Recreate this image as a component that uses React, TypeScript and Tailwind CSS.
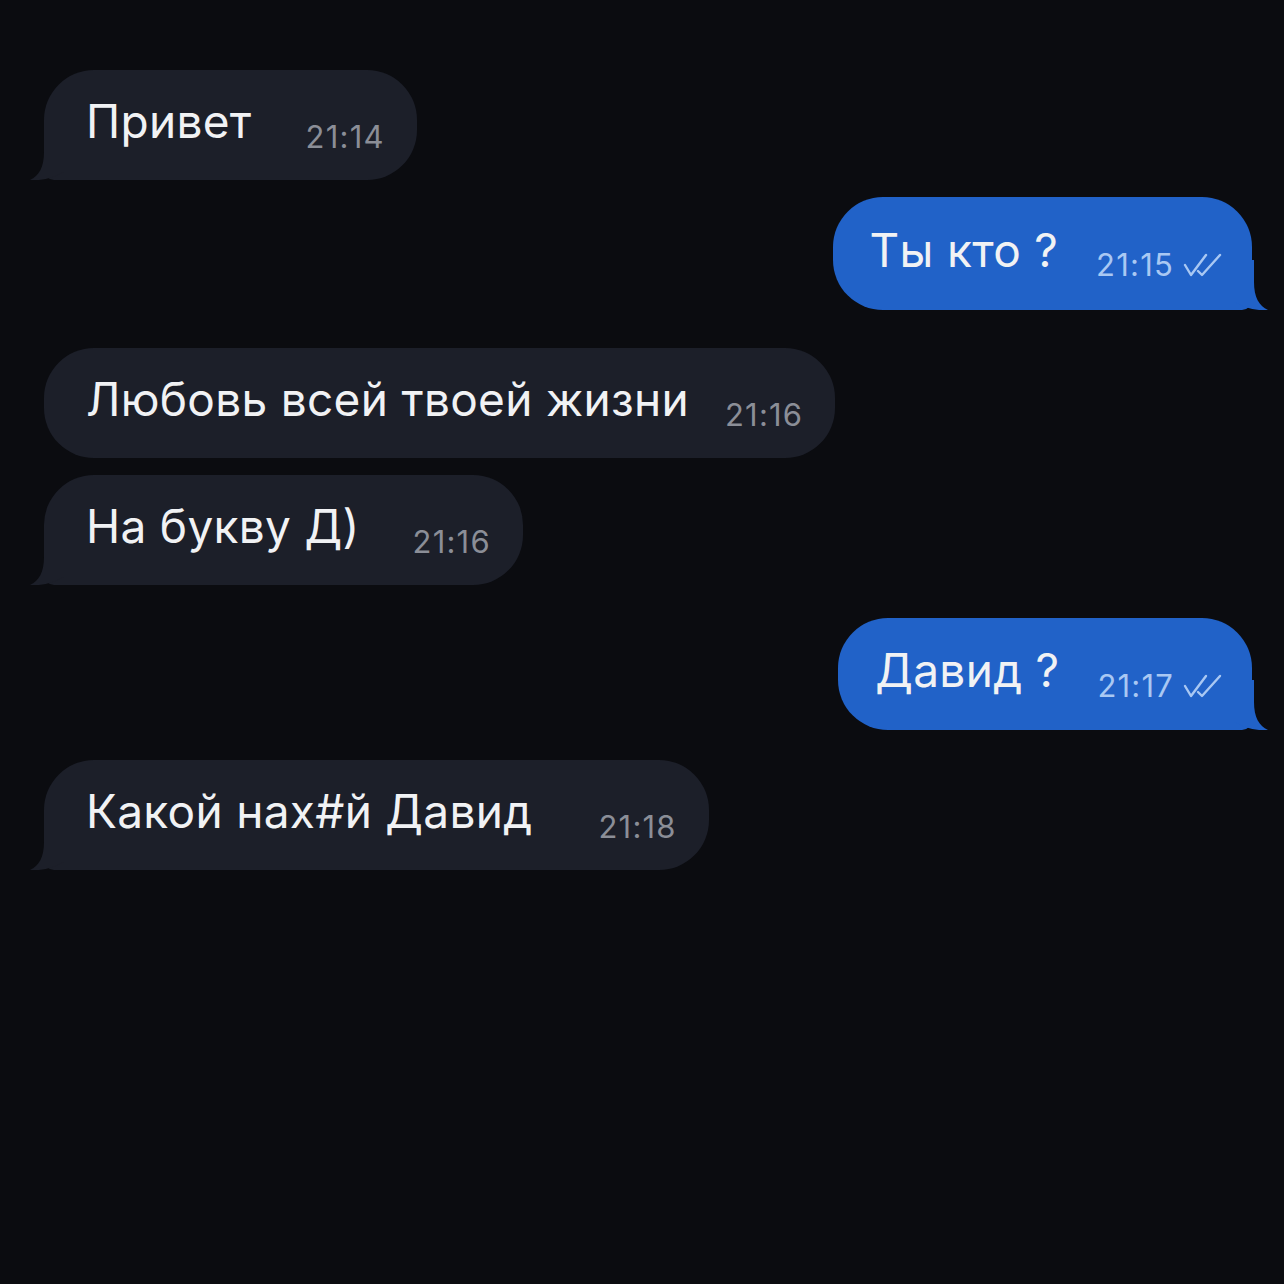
import React from 'react';

type Msg = {
  text: string;
  time: string;
  out?: boolean;
  tail?: boolean;
  mt: string;
  h: string;
  gap: string;
};

const messages: Msg[] = [
  { text: 'Привет', time: '21:14', tail: true, mt: 'mt-0', h: 'h-[110px]', gap: 'ml-[54px]' },
  { text: 'Ты кто ?', time: '21:15', out: true, tail: true, mt: 'mt-[17px]', h: 'h-[113px]', gap: 'ml-[38px]' },
  { text: 'Любовь всей твоей жизни', time: '21:16', mt: 'mt-[38px]', h: 'h-[110px]', gap: 'ml-[36px]' },
  { text: 'На букву Д)', time: '21:16', tail: true, mt: 'mt-[17px]', h: 'h-[110px]', gap: 'ml-[53px]' },
  { text: 'Давид ?', time: '21:17', out: true, tail: true, mt: 'mt-[33px]', h: 'h-[112px]', gap: 'ml-[38px]' },
  { text: 'Какой нах#й Давид', time: '21:18', tail: true, mt: 'mt-[30px]', h: 'h-[110px]', gap: 'ml-[66px]' },
];

function Tail({ out }: { out?: boolean }) {
  return (
    <svg
      width="60"
      height="50"
      viewBox="0 0 60 50"
      className={
        out
          ? 'absolute bottom-0 right-[-16px] -scale-x-100'
          : 'absolute bottom-0 left-[-14px]'
      }
    >
      <path
        d="M14 0 L14 22 C14 37 9 46 0 50 C12 51 24 48 35 41 L35 0 Z"
        fill={out ? '#2162c8' : '#1c1f29'}
      />
    </svg>
  );
}

function Checks() {
  return (
    <svg width="40" height="26" viewBox="0 0 40 26" fill="none" className="ml-[8px] mb-[2px]">
      <path d="M3 13 L9 23 L24 3" stroke="#a9c8f3" strokeWidth="2.4" strokeLinecap="round" strokeLinejoin="round" />
      <path d="M16 19 L20 23 L38 3" stroke="#a9c8f3" strokeWidth="2.4" strokeLinecap="round" strokeLinejoin="round" />
    </svg>
  );
}

function Bubble({ msg }: { msg: Msg }) {
  const side = msg.out ? 'self-end mr-[32px] pl-[37px] pr-[30px]' : 'self-start ml-[44px] pl-[42px] pr-[32px]';
  const color = msg.out ? 'bg-[#2162c8]' : 'bg-[#1c1f29]';
  const corner = msg.tail ? (msg.out ? 'rounded-br-[10px]' : 'rounded-bl-[10px]') : '';
  return (
    <div className={`relative flex items-center rounded-[50px] ${corner} ${color} ${side} ${msg.mt} ${msg.h}`}>
      {msg.tail && <Tail out={msg.out} />}
      <span className="relative -mt-[8px] text-[46px] leading-none tracking-[0.3px] text-[#f1f2f4] whitespace-nowrap">
        {msg.text}
      </span>
      <span
        className={`relative mt-[22px] ${msg.gap} flex items-end text-[31px] leading-none tracking-[1.2px] whitespace-nowrap ${
          msg.out ? 'text-[#a9c8f3]' : 'text-[#8b8e97]'
        }`}
      >
        {msg.time}
        {msg.out && <Checks />}
      </span>
    </div>
  );
}

export default function App() {
  return (
    <main
      className="min-h-screen w-full bg-[#0b0c10] pt-[70px] flex flex-col"
      style={{ fontFamily: 'Inter, Roboto, "Noto Sans", sans-serif' }}
    >
      {messages.map((m, i) => (
        <Bubble key={i} msg={m} />
      ))}
    </main>
  );
}
